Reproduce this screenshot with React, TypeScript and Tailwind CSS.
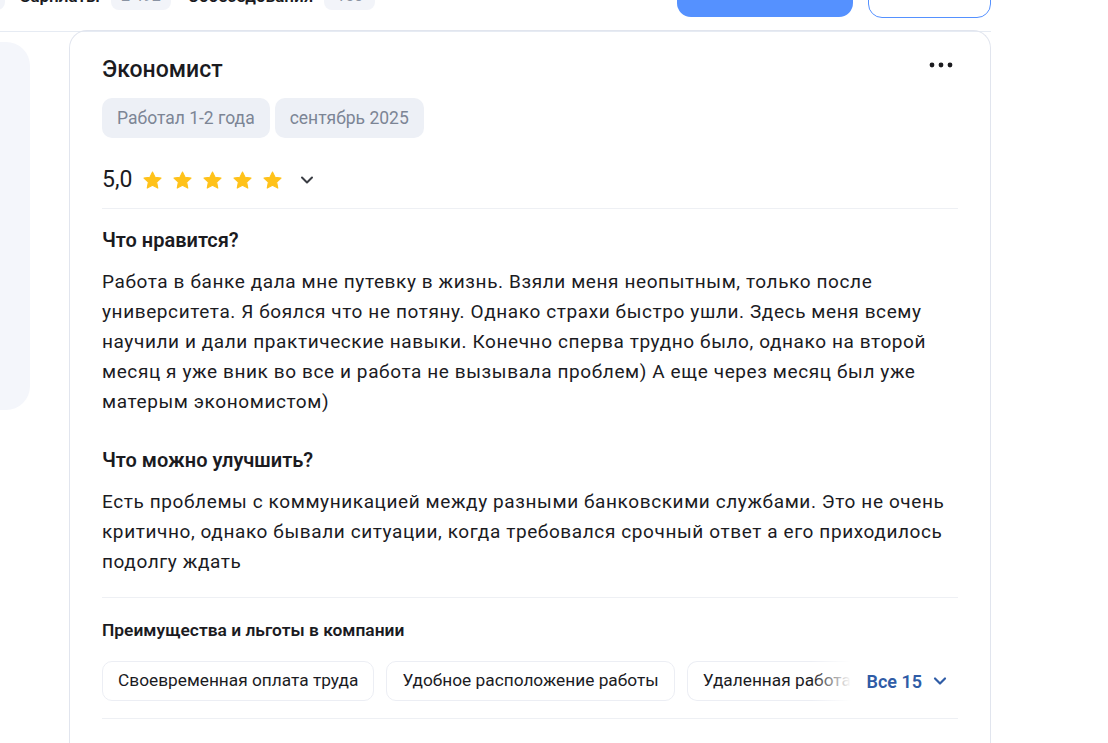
import { ChevronDown } from "lucide-react";

function Star() {
  return (
    <svg width="21" height="21" viewBox="0 0 24 24" className="shrink-0">
      <path
        d="M12 2.2l2.95 6.2 6.8.85-5 4.7 1.3 6.75L12 17.4l-6.05 3.3 1.3-6.75-5-4.7 6.8-.85z"
        fill="#ffc21a"
        stroke="#ffc21a"
        strokeWidth="1.2"
        strokeLinejoin="round"
      />
    </svg>
  );
}

const benefits = ["Своевременная оплата труда", "Удобное расположение работы"];

export default function App() {
  return (
    <div className="h-[743px] w-[1108px] overflow-hidden bg-white font-['Roboto',sans-serif] text-[#1b1b1f]">
      {/* шапка, прокручена вверх */}
      <div className="flex h-8 w-[991px] items-start overflow-hidden border-b border-[#e6ebf3]">
        <div className="-mt-[18px] flex items-center">
          <span className="ml-[-20px] h-7 w-[25px] rounded-lg bg-[#f2f4f9]" />
          <span className="ml-[15px] text-[17px] font-semibold leading-7">Зарплаты</span>
          <span className="ml-[11px] h-7 rounded-lg bg-[#f2f4f9] px-2.5 text-[16px] leading-7 text-[#8a93a3]">
            2 492
          </span>
          <span className="ml-[17px] text-[17px] font-semibold leading-7">Собеседования</span>
          <span className="ml-[11px] h-7 rounded-lg bg-[#f2f4f9] px-3 text-[16px] leading-7 text-[#8a93a3]">
            103
          </span>
        </div>
        <div className="ml-auto -mt-[31px] flex gap-[15px]">
          <button className="h-12 w-[176px] rounded-[14px] bg-[#5591ff]" />
          <button className="h-[49px] w-[123px] rounded-[14px] border border-[#5591ff] bg-white" />
        </div>
      </div>

      <div className="flex gap-[39px]">
        {/* левая колонка */}
        <div className="mt-[10px] h-[368px] w-[30px] shrink-0 rounded-r-[24px] bg-[#f4f6fb]" />

        {/* карточка отзыва */}
        <div className="-mt-[2px] min-h-[760px] w-[922px] rounded-t-[18px] border border-b-0 border-[#e1e5ee] px-8 pt-[25px]">
          <div className="flex items-center justify-between">
            <h2 className="text-[23px] font-medium leading-7">Экономист</h2>
            <svg width="24" height="6" viewBox="0 0 24 6" className="mr-[5px] mt-[-10px]">
              <circle cx="3" cy="3" r="2.4" fill="#1b1b1f" />
              <circle cx="12" cy="3" r="2.4" fill="#1b1b1f" />
              <circle cx="21" cy="3" r="2.4" fill="#1b1b1f" />
            </svg>
          </div>

          <div className="mt-[14px] flex gap-[5px]">
            <span className="flex h-10 items-center rounded-[10px] bg-[#edf0f6] px-[15px] text-[17.5px] text-[#7c8595]">
              Работал 1-2 года
            </span>
            <span className="flex h-10 items-center rounded-[10px] bg-[#edf0f6] px-[15px] text-[17.5px] text-[#7c8595]">
              сентябрь 2025
            </span>
          </div>

          <div className="mt-[28px] flex items-center border-b border-[#eef0f4] pb-[14px]">
            <span className="mr-[10px] text-[23px] leading-7">5,0</span>
            <div className="flex gap-[9px]">
              <Star />
              <Star />
              <Star />
              <Star />
              <Star />
            </div>
            <ChevronDown size={20} strokeWidth={2.4} className="ml-[14px] text-[#3a3d44]" />
          </div>

          <h3 className="mt-[19px] text-[20px] font-semibold leading-6">Что нравится?</h3>
          <p className="mt-[15px] text-[19px] leading-[30px] tracking-[0.6px]">
            Работа в банке дала мне путевку в жизнь. Взяли меня неопытным, только после
            университета. Я боялся что не потяну. Однако страхи быстро ушли. Здесь меня всему
            научили и дали практические навыки. Конечно сперва трудно было, однако на второй
            месяц я уже вник во все и работа не вызывала проблем) А еще через месяц был уже
            матерым экономистом)
          </p>

          <h3 className="mt-[31px] text-[20px] font-semibold leading-6">Что можно улучшить?</h3>
          <p className="mt-[15px] text-[19px] leading-[30px] tracking-[0.6px]">
            Есть проблемы с коммуникацией между разными банковскими службами. Это не очень
            критично, однако бывали ситуации, когда требовался срочный ответ а его приходилось
            подолгу ждать
          </p>

          <div className="mt-[20px] border-t border-[#eef0f4] pt-[22px]">
            <h4 className="text-[17.4px] font-semibold leading-5">Преимущества и льготы в компании</h4>
            <div className="mt-[21px] flex items-center border-b border-[#eef0f4] pb-[17px]">
              <div className="relative flex min-w-0 flex-1 gap-3 overflow-hidden">
                {benefits.map((b) => (
                  <span
                    key={b}
                    className="flex h-10 shrink-0 items-center whitespace-nowrap rounded-[10px] border border-[#eceef4] px-[15px] text-[17.3px]"
                  >
                    {b}
                  </span>
                ))}
                <span className="flex h-10 min-w-0 items-center overflow-hidden whitespace-nowrap rounded-l-[10px] border border-r-0 border-[#eceef4] pl-[15px] text-[17.3px]">
                  Удаленная работа
                </span>
                <div className="pointer-events-none absolute inset-y-0 right-0 w-[40px] bg-gradient-to-r from-white/0 to-white" />
              </div>
              <button className="ml-[15px] flex shrink-0 items-center gap-2 text-[18px] font-semibold text-[#2f5ca6]">
                Все 15
                <ChevronDown size={20} strokeWidth={2.6} className="mr-[8px]" />
              </button>
            </div>
          </div>
        </div>
      </div>
    </div>
  );
}
